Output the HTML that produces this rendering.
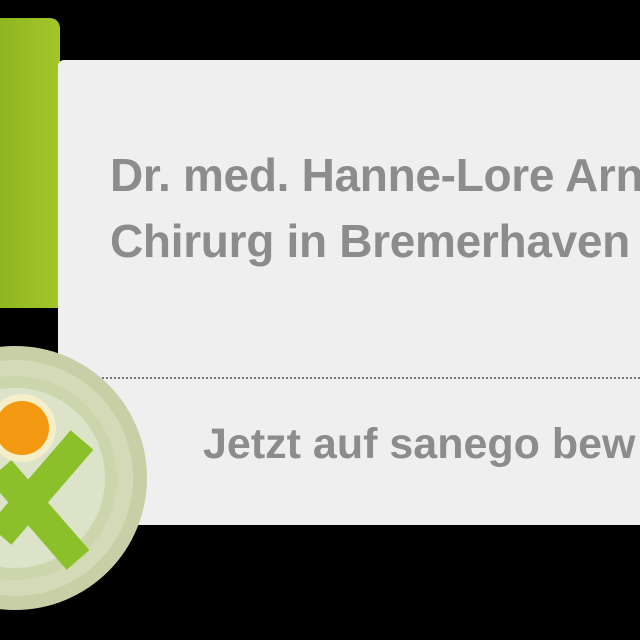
<!DOCTYPE html>
<html><head><style>
html,body{margin:0;width:640px;height:640px;background:#000;overflow:hidden;position:relative;font-family:"Liberation Sans",sans-serif}
.green{position:absolute;left:0;top:18px;width:60px;height:290px;background:linear-gradient(90deg,#8fb520,#a4c62a);border-radius:0 10px 0 0}
.card{position:absolute;left:58px;top:60px;width:582px;height:465px;background:#efefef;border-radius:6px 0 0 6px}
.t{position:absolute;color:#8c8c8c;font-weight:bold;white-space:nowrap}
.dot{position:absolute;left:90px;top:377px;width:550px;border-top:2px dotted #777}
</style></head><body>
<div class="green"></div>
<div class="card"></div>
<div class="t" style="left:110px;top:148px;font-size:46px;letter-spacing:-0.3px">Dr. med. Hanne-Lore Arn</div>
<div class="t" style="left:110px;top:214px;font-size:46px;letter-spacing:-0.3px">Chirurg in Bremerhaven</div>
<div class="dot"></div>
<div class="t" style="left:203px;top:420px;font-size:43px">Jetzt auf sanego bew</div>
<svg style="position:absolute;left:0;top:0" width="640" height="640">
<circle cx="15" cy="478" r="132" fill="#c8cfa6"/>
<circle cx="15" cy="478" r="118" fill="#d4dab7"/>
<circle cx="15" cy="478" r="102" fill="#cdd5ad"/>
<circle cx="15" cy="478" r="90" fill="#dde3c8"/>
<g stroke="#8cc02a" stroke-width="30" stroke-linecap="butt">
<line x1="0" y1="470" x2="78" y2="560"/>
<line x1="82" y1="440" x2="0" y2="535"/>
</g>
<circle cx="22" cy="428" r="34" fill="#f4efc8"/>
<circle cx="22" cy="428" r="27" fill="#f39a12"/>
</svg>
</body></html>
